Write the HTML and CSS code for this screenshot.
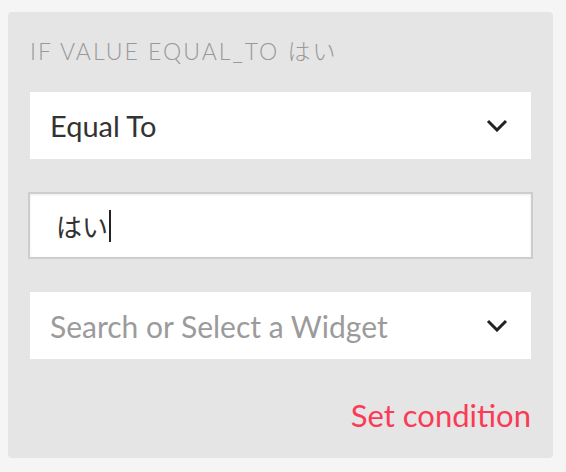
FILE: index.html
```html
<!DOCTYPE html>
<html lang="en">
<head>
    <meta charset="UTF-8">
    <title>Condition</title>
    <link rel="stylesheet" href="styles.css">
</head>
<body>

    <div class="panel">
        <p class="panel-title">IF VALUE EQUAL_TO はい</p>

        <div class="fields">
            <div class="select">
                <span class="select-value">Equal To</span>
                <svg class="chevron" width="22" height="13" viewBox="0 0 22 13">
                    <polyline points="2,2 11,11 20,2" fill="none" stroke="#222" stroke-width="3"/>
                </svg>
            </div>

            <div class="text-field">
                <span class="text-value">はい</span><span class="caret"></span>
            </div>

            <div class="select">
                <span class="select-placeholder">Search or Select a Widget</span>
                <svg class="chevron" width="22" height="13" viewBox="0 0 22 13">
                    <polyline points="2,2 11,11 20,2" fill="none" stroke="#222" stroke-width="3"/>
                </svg>
            </div>
        </div>

        <div class="actions">
            <a class="set-link" href="#">Set condition</a>
        </div>
    </div>

</body>
</html>
```

FILE: styles.css
```css
body {
    margin: 0;
    padding: 12px 13px 14px 8px;
    background-color: #f5f5f5;
    font-family: 'Lato', 'Noto Sans CJK JP', sans-serif;
}
.panel {
    background-color: #e5e5e5;
    border-radius: 4px;
    padding: 24px 22px 22px;
    height: 400px;
}
.panel-title {
    margin: 0 0 26px;
    font-size: 23px;
    font-weight: 300;
    line-height: 30px;
    letter-spacing: 2px;
    color: #999999;
}
.fields {
    display: flex;
    flex-direction: column;
    gap: 33px;
}
.select {
    display: flex;
    align-items: center;
    justify-content: space-between;
    height: 67px;
    padding: 0 23px 0 20px;
    background-color: #ffffff;
}
.select-value {
    font-size: 29px;
    color: #333333;
}
.select-placeholder {
    font-size: 30px;
    color: #9b9b9b;
}
.chevron {
    display: block;
}
.text-field {
    display: flex;
    align-items: center;
    height: 63px;
    padding: 0 26px;
    margin: 0 -2px;
    background-color: #ffffff;
    border: 2px solid #cdcdcd;
    box-shadow: inset 0 1px 3px rgba(0, 0, 0, 0.08);
}
.text-value {
    font-size: 26px;
    color: #333333;
}
.caret {
    display: inline-block;
    width: 2px;
    height: 32px;
    margin-left: 1px;
    background-color: #222222;
}
.actions {
    display: flex;
    justify-content: flex-end;
    margin-top: 38px;
}
.set-link {
    font-size: 31px;
    line-height: 36px;
    color: #fb3a56;
    text-decoration: none;
}
```
